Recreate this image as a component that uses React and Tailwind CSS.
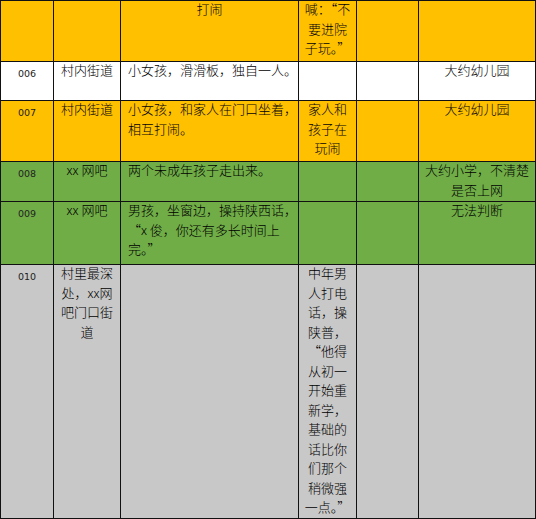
import React from 'react'

const rows = [
  {
    bg: 'bg-[#ffc000]', h: 'h-[61px]',
    cells: ['', '', ['打闹'], ['喊：“不', '要进院', '子玩。”'], '', ''],
  },
  {
    bg: 'bg-white', h: 'h-[39px]', num: '006',
    cells: [null, ['村内街道'], ['小女孩，滑滑板，独自一人。'], '', '', ['大约幼儿园']],
  },
  {
    bg: 'bg-[#ffc000]', h: 'h-[61px]', num: '007',
    cells: [null, ['村内街道'], ['小女孩，和家人在门口坐着，', '相互打闹。'], ['家人和', '孩子在', '玩闹'], '', ['大约幼儿园']],
  },
  {
    bg: 'bg-[#70ad47]', h: 'h-[40px]', num: '008',
    cells: [null, ['xx 网吧'], ['两个未成年孩子走出来。'], '', '', ['大约小学，不清楚', '是否上网']],
  },
  {
    bg: 'bg-[#70ad47]', h: 'h-[63px]', num: '009',
    cells: [null, ['xx 网吧'], ['男孩，坐窗边，操持陕西话，', '“x 俊，你还有多长时间上', '完。”'], '', '', ['无法判断']],
  },
  {
    bg: 'bg-[#c8c8c8]', h: 'h-[254px]', num: '010',
    cells: [
      null,
      ['村里最深', '处，xx网', '吧门口街', '道'],
      '',
      ['中年男', '人打电', '话，操', '陕普，', '“他得', '从初一', '开始重', '新学，', '基础的', '话比你', '们那个', '稍微强', '一点。”'],
      '',
      '',
    ],
  },
]

function Lines({ lines }) {
  if (!lines) return null
  return (
    <div className="-mt-[2px]">
      {lines.map((l, i) => (
        <div key={i} className="whitespace-nowrap">{l}</div>
      ))}
    </div>
  )
}

export default function App() {
  return (
    <div className="h-[519px] w-[536px] overflow-hidden bg-white">
      <table
        className="w-[536px] table-fixed border-collapse text-[13px] font-light leading-[19.5px] text-black"
        style={{ fontFamily: '"Noto Sans CJK SC", "Noto Sans", sans-serif' }}
      >
        <colgroup>
          <col className="w-[53px]" />
          <col className="w-[67px]" />
          <col className="w-[178px]" />
          <col className="w-[58px]" />
          <col className="w-[62px]" />
          <col className="w-[117px]" />
        </colgroup>
        <tbody>
          {rows.map((row, ri) => (
            <tr key={ri} className={row.bg}>
              {row.cells.map((c, ci) => {
                const base = `${row.h} border border-[#111] align-top p-0 overflow-hidden`
                if (ci === 0) {
                  return (
                    <td key={ci} className={`${base} text-center`}>
                      {row.num ? (
                        <span className="inline-block pt-[2px] text-[10px] font-normal leading-[16px] text-[#222]" style={{ fontFamily: '"DejaVu Sans", sans-serif', fontSize: 9.5 }}>
                          {row.num}
                        </span>
                      ) : null}
                    </td>
                  )
                }
                const left = ci === 2 && ri > 0
                return (
                  <td key={ci} className={`${base} ${left ? 'pl-[7px] text-left' : 'text-center'}`}>
                    <Lines lines={c || null} />
                  </td>
                )
              })}
            </tr>
          ))}
          <tr className="bg-[#70ad47]">
            <td className="h-[30px] border-t border-[#111]" colSpan={6}></td>
          </tr>
        </tbody>
      </table>
    </div>
  )
}
